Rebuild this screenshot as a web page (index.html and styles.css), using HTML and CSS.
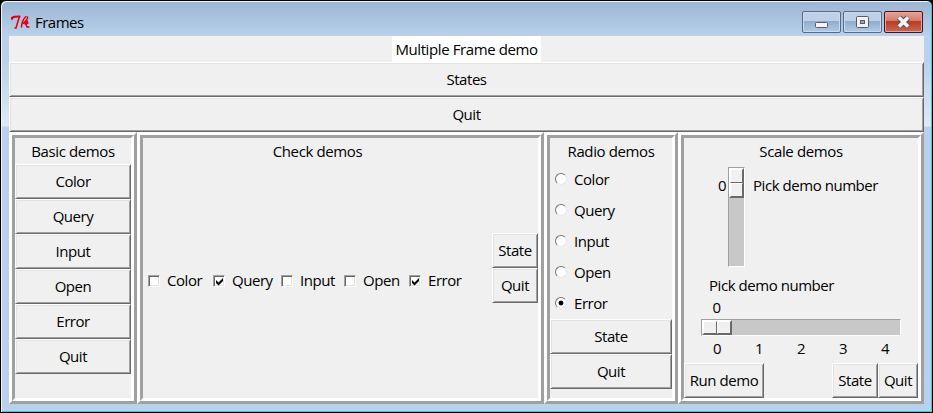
FILE: index.html
```html
<!DOCTYPE html>
<html lang="en">
<head>
<meta charset="utf-8">
<title>Frames</title>
<link rel="stylesheet" href="styles.css">
</head>
<body>
<div class="window">
  <header class="titlebar">
    <svg class="logo" width="19" height="15" viewBox="0 0 19 15" fill="none" stroke="#e00010" stroke-linecap="round">
      <path d="M1 4V2.800Q3 1.500 8.500 1.500" stroke-width="2"/><path d="M8.500 1.500Q7 6 5 13H4" stroke-width="1.500"/>
      <path d="M15 1.500Q11 5 10.500 12M16.500 2Q17.500 3 13 8" stroke-width="1.500"/><path d="M12 8.500L16 6l1 2-2 1.500 1 2.500h2" fill="#e00010" stroke-width="1.300"/>
    </svg>
    <h1 class="title">Frames</h1>
    <div class="controls">
      <button class="ctl" aria-label="Minimize"><svg width="37" height="20"><rect x="12.500" y="10.500" width="12" height="5" rx="1" fill="#f5f5f5" stroke="#545c6c"/></svg></button>
      <button class="ctl" aria-label="Maximize"><svg width="37" height="20"><rect x="12.500" y="4.500" width="12" height="11" rx="1" fill="#f2f2f2" stroke="#545c6c"/><rect x="16.500" y="8.500" width="4" height="3" fill="#8faccc" stroke="#545c6c"/></svg></button>
      <button class="ctl close" aria-label="Close"><svg width="37" height="20"><path d="M14 5.500L23 14.500M23 5.500L14 14.500" stroke="#555665" stroke-width="5.800"/><path d="M14 5.500L23 14.500M23 5.500L14 14.500" stroke="#f4f4f4" stroke-width="3.600"/></svg></button>
    </div>
  </header>
  <main class="client">
    <div class="top"><span class="banner">Multiple Frame demo</span></div>
    <button class="btn">States</button>
    <button class="btn">Quit</button>
    <div class="frames">
      <section class="frame basic">
        <h2 class="label">Basic demos</h2>
        <button class="btn">Color</button>
        <button class="btn">Query</button>
        <button class="btn">Input</button>
        <button class="btn">Open</button>
        <button class="btn">Error</button>
        <button class="btn">Quit</button>
      </section>
      <section class="frame check">
        <div class="check-main">
          <h2 class="label">Check demos</h2>
          <div class="checks">
            <label class="opt w1"><i class="box"></i><span>Color</span></label>
            <label class="opt w2"><i class="box"><svg width="9" height="9"><path d="M1 3v3l2.500 2.500L8 4V1L3.500 5.500z"/></svg></i><span>Query</span></label>
            <label class="opt w3"><i class="box"></i><span>Input</span></label>
            <label class="opt w4"><i class="box"></i><span>Open</span></label>
            <label class="opt"><i class="box"><svg width="9" height="9"><path d="M1 3v3l2.500 2.500L8 4V1L3.500 5.500z"/></svg></i><span>Error</span></label>
          </div>
        </div>
        <div class="side">
          <button class="btn">State</button>
          <button class="btn">Quit</button>
        </div>
      </section>
      <section class="frame radio">
        <h2 class="label">Radio demos</h2>
        <label class="ropt"><i class="dot"></i><span>Color</span></label>
        <label class="ropt"><i class="dot"></i><span>Query</span></label>
        <label class="ropt"><i class="dot"></i><span>Input</span></label>
        <label class="ropt"><i class="dot"></i><span>Open</span></label>
        <label class="ropt"><i class="dot on"></i><span>Error</span></label>
        <button class="btn">State</button>
        <button class="btn">Quit</button>
      </section>
      <section class="frame scale">
        <h2 class="label">Scale demos</h2>
        <div class="vscale">
          <span class="vval">0</span>
          <div class="trough vert"><div class="thumb"><i></i><i></i></div></div>
          <span class="vlabel">Pick demo number</span>
        </div>
        <div class="hscale">
          <span class="hlabel">Pick demo number</span>
          <span class="hval">0</span>
          <div class="trough horiz"><div class="thumb"><i></i><i></i></div></div>
          <div class="ticks"><span>0</span><span>1</span><span>2</span><span>3</span><span>4</span></div>
        </div>
        <div class="actions">
          <button class="btn run">Run demo</button>
          <button class="btn st">State</button>
          <button class="btn qt">Quit</button>
        </div>
      </section>
    </div>
  </main>
</div>
</body>
</html>
```
FILE: styles.css
```css
* { box-sizing: border-box; }
body { margin: 0; background: #000; color: #000; font: 15px/20px "Open Sans", "Noto Sans", sans-serif; letter-spacing: -0.45px; overflow: hidden; }
button { font: inherit; letter-spacing: inherit; color: inherit; padding: 0; margin: 0; border: 0; }
h1, h2 { font: inherit; margin: 0; }
.window { width: 933px; height: 413px; border: 1px solid #000; border-radius: 6px 6px 0 0; padding: 0 7px 7px; background: linear-gradient(#9bb5d3, #b9d1ea 35px, #b9d1ea 60px, #dfe9f5 125px, #b9d1ea 126px); box-shadow: inset 1px 1px #f0f6fc, inset -1px -1px #35c8e8; }
.titlebar { height: 35px; display: flex; align-items: flex-start; padding: 0 2px 0 3px; }
.logo { margin-top: 14px; }
.title { margin: 11px 0 0 5px; letter-spacing: -.5px; }
.controls { display: flex; gap: 2px; margin: 10px 0 0 auto; }
.ctl { width: 39px; height: 22px; border: 1px solid #566a87; border-radius: 2px; background: linear-gradient(#bed0e5 45%, #91acca 46%, #b0cae6); box-shadow: inset 0 0 0 1px #c8dbef; }
.ctl svg { display: block; }
.close { border-color: #431422; background: linear-gradient(#e5a397, #d17b6b 45%, #b83b24 46%, #ca6853); box-shadow: inset 0 0 0 1px #e5a79c; }
.client { margin: 0 1px; height: 368px; background: #f0f0f0; }
.top { height: 26px; display: flex; justify-content: center; }
.banner { width: 149px; background: #fff; text-align: center; line-height: 27px; letter-spacing: -.4px; }
.btn { display: block; width: 100%; height: 35px; background: #f0f0f0; border: 1px solid; border-color: #fff #696969 #696969 #fff; box-shadow: inset 1px 1px #e3e3e3, inset -1px -1px #a0a0a0; text-align: center; white-space: nowrap; padding-bottom: 2px; }
.frames { display: flex; height: 272px; }
.frame { border: 3px solid; border-color: #fff #a0a0a0 #a0a0a0 #fff; position: relative; padding: 3px; }
.frame::before { content: ""; position: absolute; inset: 0; border: 3px solid; border-color: #a0a0a0 #fff #fff #a0a0a0; pointer-events: none; }
.label { height: 26px; line-height: 27px; text-align: center; letter-spacing: -.38px; }
.basic { width: 128px; }
.check { width: 407px; display: flex; }
.check-main { flex: 1; display: flex; flex-direction: column; }
.checks { flex: 1; display: flex; align-items: center; padding-left: 5px; }
.opt { display: flex; align-items: center; gap: 7px; white-space: nowrap; }
.opt span, .ropt span { padding-bottom: 2px; }
.w1 { width: 65px; } .w2 { width: 68px; } .w3 { width: 63px; } .w4 { width: 65px; }
.box { width: 12px; height: 12px; flex: none; background: #fff; border: 1px solid; border-color: #a0a0a0 #fff #fff #a0a0a0; box-shadow: inset 1px 1px #696969, inset -1px -1px #e3e3e3; margin-bottom: 1px; }
.box svg { display: block; margin: 1px; }
.side { width: 46px; align-self: center; }
.radio { width: 134px; }
.ropt { display: flex; height: 31px; align-items: center; gap: 7px; padding-left: 5px; }
.dot { width: 12px; height: 12px; border: 1px solid; border-color: #757575 #e8e8e8 #e8e8e8 #757575; border-radius: 50%; background: #fff; margin-top: -2px; }
.on { background: radial-gradient(circle, #000 2px, #fff 2.8px); }
.scale { width: 246px; display: flex; flex-direction: column; }
.vscale { display: flex; height: 102px; padding: 3px 0 0 33px; }
.vval { width: 11px; line-height: 36px; padding-left: 1px; }
.trough { background: #c8c8c8; border: 1px solid; border-color: #a0a0a0 #fff #fff #a0a0a0; }
.vert { width: 17px; height: 100px; }
.vlabel { margin-left: 8px; line-height: 36px; }
.thumb { display: flex; border: 1px solid; border-color: #fff #696969 #696969 #fff; }
.thumb i { flex: 1; background: #f0f0f0; border: 1px solid; border-color: #fff #696969 #696969 #fff; }
.vert .thumb { flex-direction: column; height: 30px; }
.horiz { width: 200px; height: 17px; }
.horiz .thumb { width: 30px; height: 15px; }
.hscale { flex: 1; padding: 9px 0 0 17px; }
.hlabel { display: block; height: 22px; padding-left: 8px; }
.hval { display: block; width: 31px; height: 22px; text-align: center; }
.ticks { display: flex; margin: 2px 0 0 -5px; }
.ticks span { width: 42px; text-align: center; }
.actions { display: flex; }
.run { width: 80px; } .st { width: 46px; margin-left: auto; } .qt { width: 40px; }
```
